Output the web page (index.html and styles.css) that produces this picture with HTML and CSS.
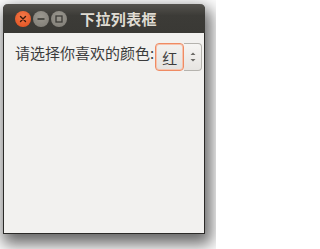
FILE: index.html
```html
<!DOCTYPE html>
<html lang="zh">
<head>
<meta charset="utf-8">
<link rel="stylesheet" href="styles.css">
</head>
<body>
<div class="stage">
  <div class="window">
    <div class="titlebar">
      <div class="controls">
        <span class="btn close"><svg width="16" height="16" viewBox="0 0 16 16"><path d="M5.5 5.5L10.5 10.5M10.5 5.5L5.5 10.5" stroke="#3a1a0c" stroke-width="1.4" stroke-linecap="round"/></svg></span>
        <span class="btn"><svg width="16" height="16" viewBox="0 0 16 16"><path d="M4.5 8H11.5" stroke="#3c3b37" stroke-width="1.6"/></svg></span>
        <span class="btn"><svg width="16" height="16" viewBox="0 0 16 16"><rect x="5" y="5" width="6" height="6" fill="none" stroke="#3c3b37" stroke-width="1.3"/></svg></span>
      </div>
      <div class="title">下拉列表框</div>
    </div>
    <div class="content">
      <div class="row">
        <span class="label">请选择你喜欢的颜色:</span>
        <div class="combo">
          <div class="value">红</div>
          <div class="spin"><svg width="8" height="14" viewBox="0 0 8 14"><path d="M1.5 5L4 2.5L6.5 5Z M1.5 9L4 11.5L6.5 9Z" fill="#6b6a66"/></svg></div>
        </div>
      </div>
    </div>
  </div>
</div>
</body>
</html>
```
FILE: styles.css
```css
html, body {
  margin: 0;
  padding: 0;
  background: #ffffff;
  font-family: "Noto Sans CJK SC", "Noto Sans", sans-serif;
}
.stage {
  width: 216px;
  height: 249px;
  padding: 4px 0 0 3px;
  box-sizing: border-box;
  background: #fdfdfd;
  overflow: hidden;
}
.window {
  width: 202px;
  height: 230px;
  box-sizing: border-box;
  background: #f2f1ef;
  border: 1px solid #2b2a28;
  border-top: none;
  border-radius: 5px 5px 0 0;
  box-shadow: 3px 7px 16px 3px rgba(0,0,0,0.6);
  display: flex;
  flex-direction: column;
}
.titlebar {
  height: 29px;
  margin: 0 -1px;
  border-radius: 5px 5px 0 0;
  background: linear-gradient(#55534e, #3c3b37 40%, #3a3935);
  display: flex;
  align-items: center;
  padding-left: 12px;
}
.controls {
  display: flex;
  gap: 2px;
}
.btn {
  width: 16px;
  height: 16px;
  border-radius: 50%;
  background: radial-gradient(circle at 50% 35%, #9b9890, #7d7a73);
  display: flex;
}
.btn.close {
  background: radial-gradient(circle at 50% 35%, #f47a4a, #e04d1c);
}
.title {
  margin-left: 13px;
  color: #dfdbd2;
  font-weight: bold;
  font-size: 15px;
  letter-spacing: 0.4px;
}
.content {
  padding: 10px 0 0 11px;
}
.row {
  display: flex;
  align-items: center;
}
.label {
  font-size: 15px;
  color: #3c3c3c;
  margin-top: -9px;
}
.combo {
  display: flex;
  height: 28px;
  margin-left: 1px;
}
.value {
  width: 29px;
  box-sizing: border-box;
  border: 1px solid #ef8b63;
  border-radius: 4px;
  box-shadow: inset 0 0 0 1px #f7c3ad;
  background: linear-gradient(#f2f1ef, #e4e2df);
  font-size: 15px;
  color: #3c3c3c;
  display: flex;
  align-items: center;
  justify-content: center;
}
.spin {
  width: 18px;
  box-sizing: border-box;
  border: 1px solid #b5b3ae;
  border-left: none;
  border-radius: 0 4px 4px 0;
  background: linear-gradient(#f6f5f3, #e6e4e1);
  display: flex;
  align-items: center;
  justify-content: center;
}
```
